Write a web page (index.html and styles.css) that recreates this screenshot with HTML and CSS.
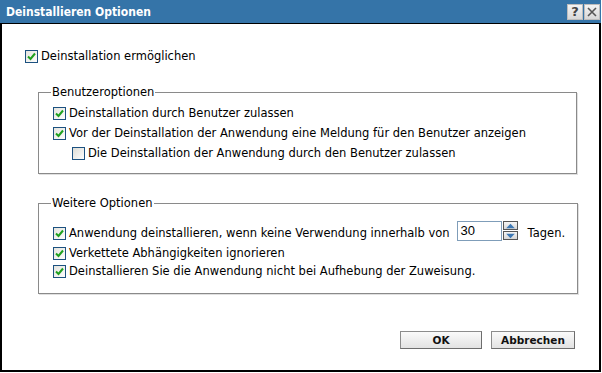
FILE: index.html
```html
<!DOCTYPE html>
<html lang="de">
<head>
<meta charset="utf-8">
<title>Deinstallieren Optionen</title>
<link rel="stylesheet" href="styles.css">
</head>
<body>
<div class="window">
  <div class="titlebar">
    <span class="title">Deinstallieren Optionen</span>
    <div class="tb-buttons">
      <span class="tb-btn">?</span>
      <span class="tb-btn">
        <svg width="12" height="12" viewBox="0 0 12 12"><path d="M2 2 L10 10 M10 2 L2 10" stroke="#555" stroke-width="1.6"/></svg>
      </span>
    </div>
  </div>
  <div class="content">
    <label class="row main-row"><span class="cb checked"><svg viewBox="0 0 11 11"><path d="M2 5.5 L4.5 8 L9 2.5" fill="none" stroke="#1fa01f" stroke-width="2"/></svg></span>Deinstallation ermöglichen</label>

    <fieldset class="group g1">
      <legend>Benutzeroptionen</legend>
      <label class="row"><span class="cb checked"><svg viewBox="0 0 11 11"><path d="M2 5.5 L4.5 8 L9 2.5" fill="none" stroke="#1fa01f" stroke-width="2"/></svg></span>Deinstallation durch Benutzer zulassen</label>
      <label class="row"><span class="cb checked"><svg viewBox="0 0 11 11"><path d="M2 5.5 L4.5 8 L9 2.5" fill="none" stroke="#1fa01f" stroke-width="2"/></svg></span>Vor der Deinstallation der Anwendung eine Meldung für den Benutzer anzeigen</label>
      <label class="row indent"><span class="cb"></span>Die Deinstallation der Anwendung durch den Benutzer zulassen</label>
    </fieldset>

    <fieldset class="group g2">
      <legend>Weitere Optionen</legend>
      <div class="row spin-row">
        <span class="cb checked"><svg viewBox="0 0 11 11"><path d="M2 5.5 L4.5 8 L9 2.5" fill="none" stroke="#1fa01f" stroke-width="2"/></svg></span>
        <span>Anwendung deinstallieren, wenn keine Verwendung innerhalb von</span>
        <span class="spinner">
          <span class="spin-input">30</span>
          <span class="spin-btns">
            <span class="spin-btn"><svg width="12" height="7" viewBox="0 0 12 7"><path d="M1 6 L6 1 L11 6 Z" fill="#3d78b4"/></svg></span>
            <span class="spin-btn"><svg width="12" height="7" viewBox="0 0 12 7"><path d="M1 1 L6 6 L11 1 Z" fill="#3d78b4"/></svg></span>
          </span>
        </span>
        <span class="tagen">Tagen.</span>
      </div>
      <label class="row"><span class="cb checked"><svg viewBox="0 0 11 11"><path d="M2 5.5 L4.5 8 L9 2.5" fill="none" stroke="#1fa01f" stroke-width="2"/></svg></span>Verkettete Abhängigkeiten ignorieren</label>
      <label class="row"><span class="cb checked"><svg viewBox="0 0 11 11"><path d="M2 5.5 L4.5 8 L9 2.5" fill="none" stroke="#1fa01f" stroke-width="2"/></svg></span>Deinstallieren Sie die Anwendung nicht bei Aufhebung der Zuweisung.</label>
    </fieldset>

    <div class="actions">
      <button class="btn ok">OK</button>
      <button class="btn cancel">Abbrechen</button>
    </div>
  </div>
</div>
</body>
</html>
```
FILE: styles.css
```css
* { box-sizing: border-box; }
html, body { margin: 0; padding: 0; background: #fff; }
body {
  font-family: "DejaVu Sans", sans-serif;
  font-size: 11.5px;
  color: #000;
}
.window {
  width: 601px;
  height: 372px;
  display: flex;
  flex-direction: column;
}
.titlebar {
  height: 24px;
  background: #3574a8;
  border-bottom: 1px solid #000;
  display: flex;
  align-items: center;
  justify-content: space-between;
  padding-left: 6px;
  padding-right: 1px;
}
.title {
  color: #fff;
  font-weight: bold;
  font-size: 12px;
  font-family: "DejaVu Sans Condensed", "DejaVu Sans", sans-serif;
  margin-top: 1px;
}
.tb-buttons { display: flex; gap: 1px; }
.tb-btn {
  width: 16px;
  height: 16px;
  background: linear-gradient(#f4f4f4, #d8d8d8);
  border: 1px solid #bdbdbd;
  display: flex;
  align-items: center;
  justify-content: center;
  font-weight: bold;
  font-size: 13px;
  color: #444;
  font-family: "DejaVu Sans", sans-serif;
}
.content {
  flex: 1;
  border: 2px solid #000;
  border-top: none;
  padding: 23px 22px 0 23px;
  display: flex;
  flex-direction: column;
}
.row {
  display: flex;
  align-items: center;
  height: 18px;
  white-space: nowrap;
}
.cb {
  width: 13px;
  height: 13px;
  border: 1px solid #1c5180;
  background: linear-gradient(135deg, #dcdcd6, #fdfdfd);
  margin-right: 3px;
  flex: none;
  display: flex;
}
.cb.checked { background: linear-gradient(135deg, #e4e4de, #fdfdfd); }
.cb svg { width: 11px; height: 11px; }
.main-row { margin-bottom: 20px; }
.group {
  margin: 0 0 0 13px;
  padding: 4px 12px 10px 14px;
  border: 1px solid #8a8a8a;
  box-shadow: 1px 1px 0 #e0e0e0;
}
.group legend {
  padding: 0 1px;
  margin-left: -2px;
}
.g1 .row { height: 20px; }
.indent { padding-left: 19px; }
.g2 { margin-top: 22px; padding-top: 12px; padding-bottom: 13px; }
.spin-row { height: 22px; }
.spinner {
  display: flex;
  align-items: center;
  margin-left: 7px;
  margin-top: -5px;
}
.spin-input {
  width: 45px;
  height: 20px;
  border: 1px solid #7f9db9;
  font-family: "Liberation Sans", sans-serif;
  font-size: 13px;
  padding: 1px 0 0 3px;
  line-height: 16px;
}
.spin-btns {
  display: flex;
  flex-direction: column;
  margin-left: 1px;
  gap: 1px;
}
.spin-btn {
  width: 15px;
  height: 9px;
  background: linear-gradient(#f6f6f6, #d6d6d6);
  border: 1px solid #555;
  display: flex;
  align-items: center;
  justify-content: center;
}
.spin-btn svg { width: 11px; height: 6px; }
.tagen { margin-left: 10px; }
.actions {
  margin-top: 37px;
  display: flex;
  justify-content: flex-end;
  gap: 9px;
  padding-right: 2px;
}
.btn {
  width: 82px;
  height: 18px;
  border: 1px solid #8c8c8c;
  border-right-color: #6d6d6d;
  border-bottom-color: #6d6d6d;
  background: linear-gradient(#fafafa, #e2e2e2);
  font-family: "DejaVu Sans", sans-serif;
  font-weight: bold;
  font-size: 10.5px;
  color: #111;
  padding: 0;
}
.btn.cancel { width: 84px; }
```
